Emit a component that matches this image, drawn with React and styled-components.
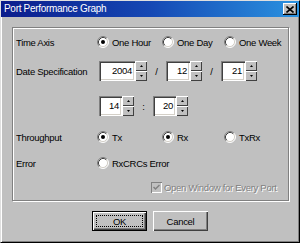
import React from 'react';
import styled, { createGlobalStyle } from 'styled-components';

const FONT = `"Liberation Sans", Arial, sans-serif`;

const Global = createGlobalStyle`
  html, body { margin: 0; padding: 0; background: #c0c0c0; }
  body { font-family: ${FONT}; }
  #root { width: 300px; height: 243px; }
`;

const Window = styled.div`
  box-sizing: border-box;
  width: 300px;
  height: 243px;
  background: #c0c0c0;
  border-top: 1px solid #dfdfdf;
  border-left: 1px solid #dfdfdf;
  border-right: 1px solid #000;
  border-bottom: 1px solid #000;
  box-shadow: inset 1px 1px #fff, inset -1px -1px #808080;
  display: flex;
  flex-direction: column;
  font-family: ${FONT};
  font-size: 9.5px;
  letter-spacing: -0.3px;
`;

const TitleBar = styled.div`
  height: 16px;
  display: flex;
  align-items: center;
  justify-content: space-between;
  padding: 0 2px 0 3px;
  background: linear-gradient(90deg, #0b1c8c 0%, #1548b4 50%, #2a92e0 100%);
  color: #fff;
  font-size: 10px;
`;

const TitleText = styled.span`
  white-space: nowrap;
  line-height: 16px;
`;

const CloseButton = styled.div`
  width: 14px;
  height: 12px;
  box-sizing: border-box;
  background: #c0c0c0;
  box-shadow: inset -1px -1px #000, inset 1px 1px #fff, inset -2px -2px #808080;
  display: flex;
  align-items: center;
  justify-content: center;
`;

const Body = styled.div`
  padding: 10px 10px 0 11px;
  display: flex;
  flex-direction: column;
`;

const GroupBox = styled.div`
  box-sizing: border-box;
  width: 277px;
  height: 174px;
  border: 1px solid #808080;
  box-shadow: inset 1px 1px #fff, 1px 1px #fff;
  padding: 0 0 0 3px;
  display: flex;
  flex-direction: column;
`;

const Row = styled.div`
  display: grid;
  grid-template-columns: 81px 1fr;
  align-items: center;
  height: ${p => p.$h}px;
  margin-top: ${p => p.$top}px;
`;

const Label = styled.span`
  color: #000;
  white-space: nowrap;
`;

const Options = styled.div`
  display: grid;
  grid-template-columns: 65px 62px auto;
  align-items: center;
`;

const RadioItem = styled.label`
  display: flex;
  align-items: center;
  gap: 3px;
  color: #000;
  white-space: nowrap;
  svg { flex-shrink: 0; }
`;

const SpinRow = styled.div`
  display: flex;
  align-items: center;
  margin-left: 2px;
`;

const TextBox = styled.div`
  box-sizing: border-box;
  width: ${p => p.$w}px;
  height: 20px;
  background: #fff;
  box-shadow: inset 1px 1px #808080, inset 2px 2px #404040, inset -1px -1px #fff, inset -2px -2px #d4d0c8;
  color: #000;
  text-align: right;
  padding-right: 3px;
  line-height: 20px;
`;

const SpinCol = styled.div`
  display: flex;
  flex-direction: column;
  width: 12px;
  height: 20px;
`;

const SpinBtn = styled.div`
  box-sizing: border-box;
  height: 10px;
  background: #c0c0c0;
  box-shadow: inset 1px 1px #fff, inset -1px -1px #404040;
  display: flex;
  align-items: center;
  justify-content: center;
`;

const Sep = styled.span`
  width: 19px;
  text-align: center;
  color: #000;
`;

const CheckItem = styled.div`
  display: flex;
  align-items: center;
  gap: 2px;
  margin-left: 54px;
`;

const CheckBox = styled.div`
  box-sizing: border-box;
  flex-shrink: 0;
  width: 11px;
  height: 11px;
  background: #c0c0c0;
  box-shadow: inset 1px 1px #808080, inset -1px -1px #fff;
  display: flex;
  align-items: center;
  justify-content: center;
`;

const DisabledText = styled.span`
  color: #808080;
  text-shadow: 1px 1px 0 #fff;
  white-space: nowrap;
`;

const ButtonRow = styled.div`
  display: flex;
  justify-content: center;
  gap: 6px;
  margin-top: 10px;
  margin-left: -11px;
  margin-right: -10px;
`;

const Button = styled.div`
  box-sizing: border-box;
  width: 55px;
  height: 20px;
  background: #c0c0c0;
  color: #000;
  display: flex;
  align-items: center;
  justify-content: center;
  box-shadow: ${p =>
    p.$default
      ? 'inset 1px 1px #000, inset -1px -1px #000, inset 2px 2px #fff, inset -2px -2px #404040, inset -3px -3px #808080'
      : 'inset 1px 1px #fff, inset -1px -1px #404040, inset -2px -2px #808080'};
`;

const Focus = styled.span`
  box-sizing: border-box;
  width: 47px;
  height: 12px;
  border: 1px dotted #000;
  display: flex;
  align-items: center;
  justify-content: center;
`;

const Radio = ({ checked }) => (
  <svg width="12" height="12" viewBox="0 0 12 12">
    <circle cx="6" cy="6" r="5" fill="#fff" />
    <path d="M2.11 9.89 A5.5 5.5 0 0 1 9.89 2.11" fill="none" stroke="#808080" strokeWidth="1" />
    <path d="M9.89 2.11 A5.5 5.5 0 0 1 2.11 9.89" fill="none" stroke="#fff" strokeWidth="1" />
    <path d="M2.82 9.18 A4.5 4.5 0 0 1 9.18 2.82" fill="none" stroke="#404040" strokeWidth="1" />
    <path d="M9.18 2.82 A4.5 4.5 0 0 1 2.82 9.18" fill="none" stroke="#d4d0c8" strokeWidth="1" />
    {checked && <circle cx="6" cy="6" r="2" fill="#000" />}
  </svg>
);

const Arrow = ({ up }) => (
  <svg width="3" height="2" viewBox="0 0 3 2">
    <path d={up ? 'M1.5 0 L3 2 L0 2 Z' : 'M0 0 L3 0 L1.5 2 Z'} fill="#000" />
  </svg>
);

const Spinner = ({ value, width }) => (
  <>
    <TextBox $w={width}>{value}</TextBox>
    <SpinCol>
      <SpinBtn><Arrow up /></SpinBtn>
      <SpinBtn><Arrow /></SpinBtn>
    </SpinCol>
  </>
);

export default function App() {
  return (
    <>
      <Global />
      <Window>
        <TitleBar>
          <TitleText>Port Performance Graph</TitleText>
          <CloseButton>
            <svg width="8" height="7" viewBox="0 0 8 7">
              <path d="M0.5 0.5 L7.5 6.5 M7.5 0.5 L0.5 6.5" stroke="#000" strokeWidth="1.6" />
            </svg>
          </CloseButton>
        </TitleBar>
        <Body>
          <GroupBox>
            <Row $h={18} $top={5}>
              <Label>Time Axis</Label>
              <Options>
                <RadioItem><Radio checked />One Hour</RadioItem>
                <RadioItem><Radio />One Day</RadioItem>
                <RadioItem><Radio />One Week</RadioItem>
              </Options>
            </Row>
            <Row $h={20} $top={10}>
              <Label>Date Specification</Label>
              <SpinRow>
                <Spinner value="2004" width={36} />
                <Sep>/</Sep>
                <Spinner value="12" width={24} />
                <Sep>/</Sep>
                <Spinner value="21" width={24} />
              </SpinRow>
            </Row>
            <Row $h={20} $top={15}>
              <Label />
              <SpinRow>
                <Spinner value="14" width={23} />
                <Sep>:</Sep>
                <Spinner value="20" width={23} />
              </SpinRow>
            </Row>
            <Row $h={18} $top={12}>
              <Label>Throughput</Label>
              <Options>
                <RadioItem><Radio checked />Tx</RadioItem>
                <RadioItem><Radio checked />Rx</RadioItem>
                <RadioItem><Radio />TxRx</RadioItem>
              </Options>
            </Row>
            <Row $h={18} $top={8}>
              <Label>Error</Label>
              <Options>
                <RadioItem><Radio />RxCRCs Error</RadioItem>
              </Options>
            </Row>
            <Row $h={18} $top={6}>
              <Label />
              <CheckItem>
                <CheckBox>
                  <svg width="7" height="7" viewBox="0 0 7 7">
                    <path d="M0.5 3 L2.5 5 L6.5 1" fill="none" stroke="#808080" strokeWidth="1.5" />
                  </svg>
                </CheckBox>
                <DisabledText>Open Window for Every Port</DisabledText>
              </CheckItem>
            </Row>
          </GroupBox>
          <ButtonRow>
            <Button $default><Focus>OK</Focus></Button>
            <Button>Cancel</Button>
          </ButtonRow>
        </Body>
      </Window>
    </>
  );
}
